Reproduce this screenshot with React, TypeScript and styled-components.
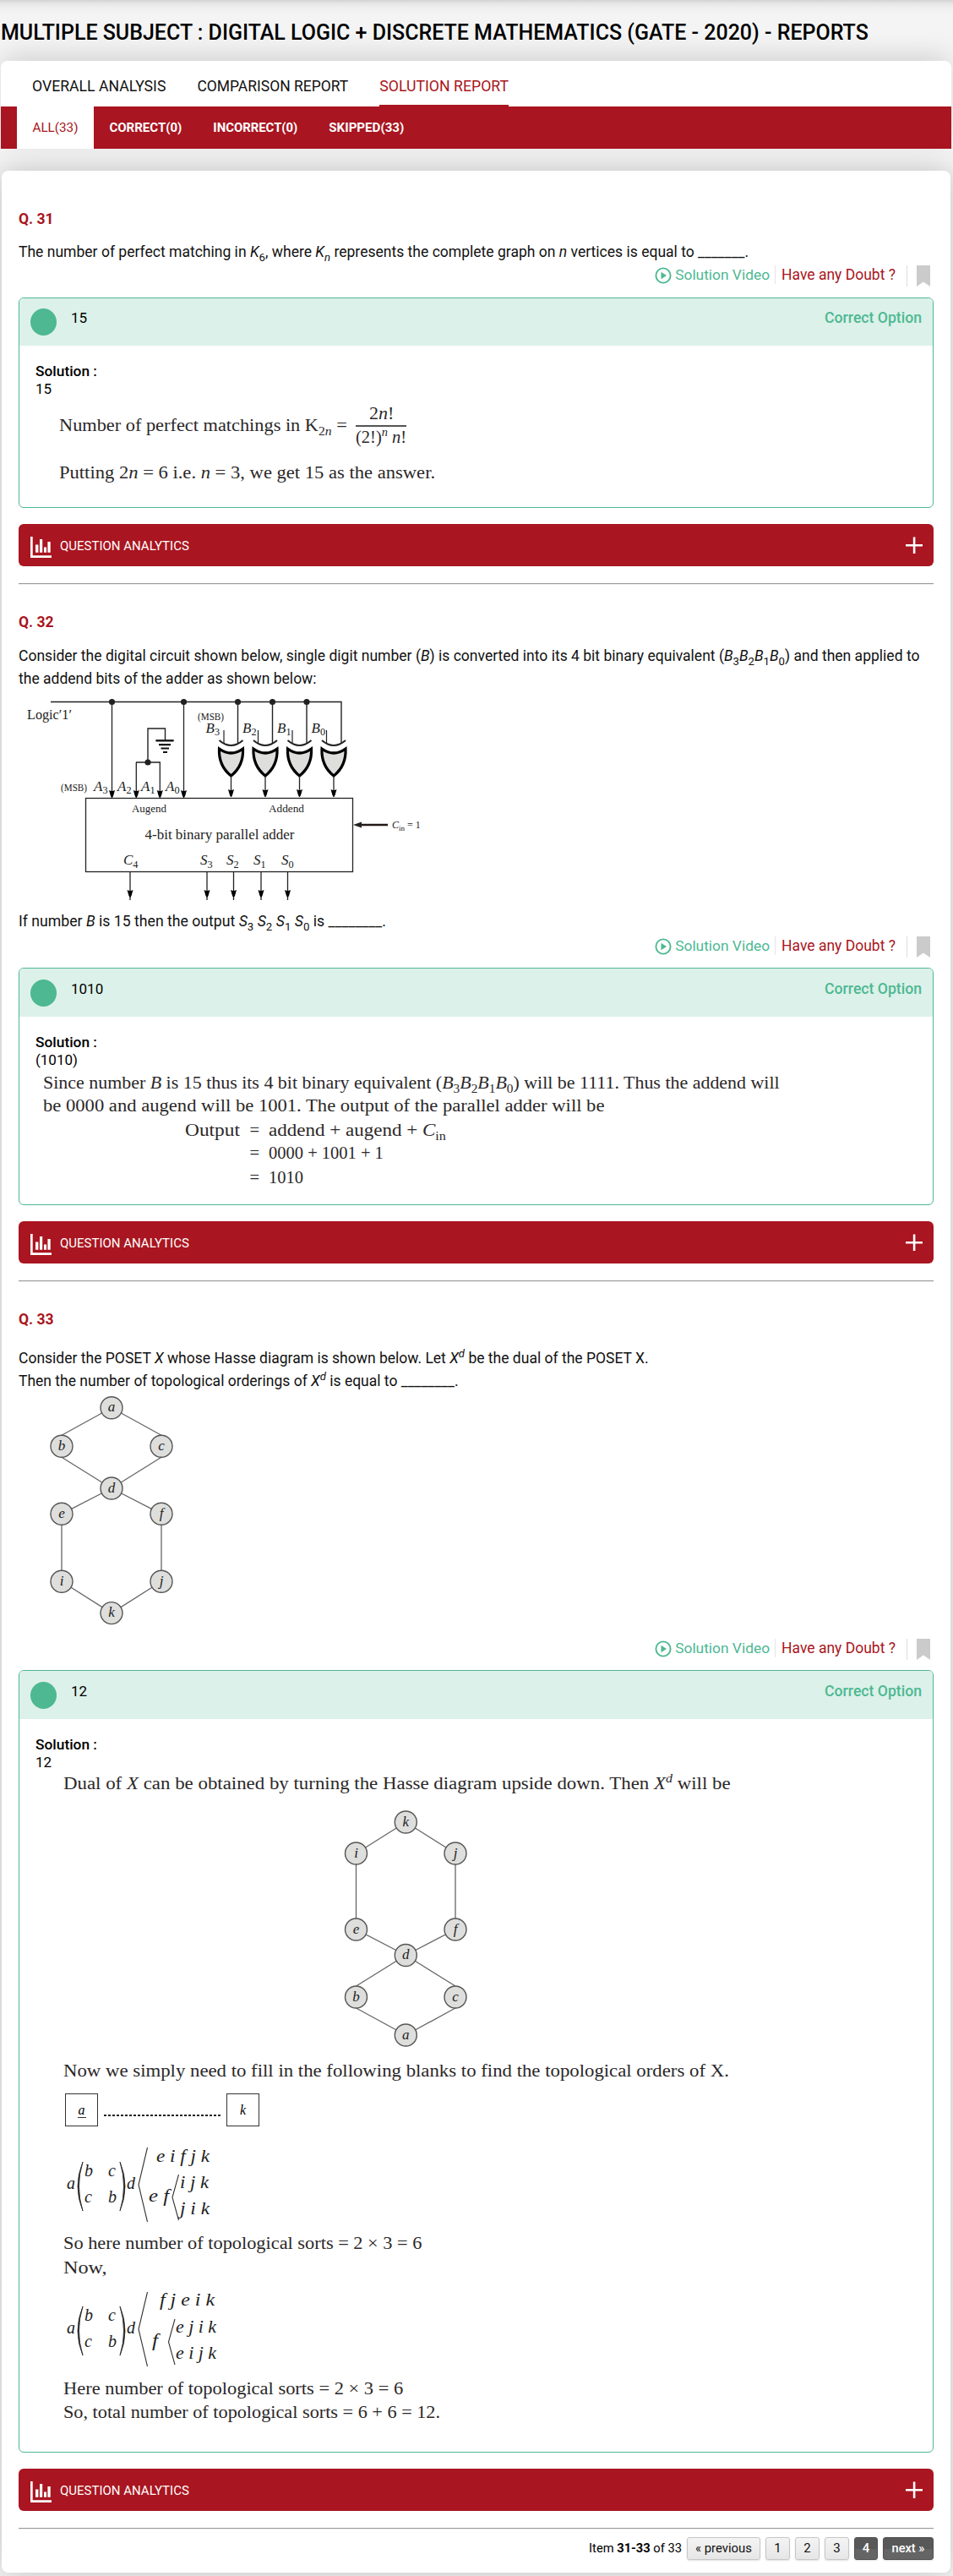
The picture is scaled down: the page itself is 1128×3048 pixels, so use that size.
import React, { useLayoutEffect, useRef, useState } from "react";
import styled, { createGlobalStyle } from "styled-components";

const RED = "#a91520";
const GREEN = "#4db892";
const SERIF = '"Liberation Serif", "Times New Roman", serif';

const Global = createGlobalStyle`
  * { box-sizing: border-box; }
  body {
    margin: 0;
    background: #f4f4f4;
    font-family: Roboto, "Liberation Sans", sans-serif;
    font-size: 17px;
    color: #000;
    overflow-x: hidden;
  }
  sub, sup { font-size: 75%; line-height: 0; }
`;

const Page = styled.div`
  height: 3048px;
  overflow: hidden;
  background: linear-gradient(#d3d3d3, #e6e6e6 4px, #f0f0f0 10px, #f4f4f4 18px);
`;
const Title = styled.h1`
  margin: 0;
  height: 72px;
  padding: 24px 0 0 1px;
  font-size: 25px;
  line-height: 29px;
  font-weight: 500;
`;
const HeaderCard = styled.header`
  margin: 0 2px 26px 1px;
  border-radius: 8px 8px 0 0;
  background: #fff;
  box-shadow: 0 -10px 30px -4px rgba(0, 0, 0, 0.14);
`;
const Tabs = styled.nav`
  display: flex;
  gap: 37px;
  height: 54px;
  padding-left: 37px;
`;
const Tab = styled.a<{ $on?: boolean }>`
  height: 54px;
  padding-top: 19px;
  line-height: 22px;
  color: ${(p) => (p.$on ? RED : "#111")};
  border-bottom: 2px solid ${(p) => (p.$on ? RED : "transparent")};
`;
const SubTabs = styled.nav`
  display: flex;
  height: 50px;
  padding-left: 19px;
  background: ${RED};
`;
const SubTab = styled.a<{ $on?: boolean }>`
  height: 50px;
  padding: 0 18.5px;
  font-size: 15px;
  line-height: 50px;
  font-weight: ${(p) => (p.$on ? 400 : 700)};
  color: ${(p) => (p.$on ? RED : "#fff")};
  background: ${(p) => (p.$on ? "#fff" : "transparent")};
`;
const Card = styled.main`
  height: 2842px;
  margin: 0 3px 0 2px;
  padding: 13px 20px 0;
  border-radius: 8px;
  background: #fff;
  box-shadow: 0 0 34px rgba(0, 0, 0, 0.22);
`;
const Question = styled.section`
  padding-top: 34px;
`;
const QuestionNumber = styled.h2<{ $gap: number }>`
  margin: 0 0 ${(p) => p.$gap}px;
  font-size: 17.5px;
  line-height: 20px;
  font-weight: 700;
  color: ${RED};
`;
const Prompt = styled.div`
  line-height: 27px;
  color: #111;
`;
const Row = styled.div`
  white-space: nowrap;
`;
const Line = styled.span`
  display: inline-block;
  width: max-content;
  white-space: nowrap;
  line-height: inherit;
  vertical-align: top;
  transform-origin: 0 50%;
`;
const LineBox = styled.span`
  display: inline-block;
  flex: none;
  vertical-align: top;
  text-align: left;
`;
const Meta = styled.div<{ $top: number; $bottom: number }>`
  display: flex;
  justify-content: flex-end;
  height: 25px;
  margin: ${(p) => p.$top}px 0 ${(p) => p.$bottom}px;
  padding-right: 4px;
  font-size: 18px;
  line-height: 22px;
`;
const VideoLink = styled.a`
  display: flex;
  gap: 4px;
  height: 22px;
  padding-right: 6px;
  border-right: 1px solid #e4e4e4;
  color: ${GREEN};
  svg { margin-top: 2px; }
`;
const DoubtLink = styled.a`
  height: 25px;
  margin-right: 11px;
  padding: 0 13px 0 7px;
  border-right: 1px solid #ddd;
  color: ${RED};
`;
const Panel = styled.article<{ $h: number }>`
  height: ${(p) => p.$h}px;
  margin-bottom: 19px;
  border: 1px solid ${GREEN};
  border-radius: 6px;
  overflow: hidden;
`;
const PanelHead = styled.div<{ $h: number }>`
  display: flex;
  height: ${(p) => p.$h}px;
  padding: ${(p) => p.$h - 44}px 13px 0;
  line-height: 23px;
  background: #dcf1e9;
`;
const Dot = styled.i`
  width: 31px;
  height: 32px;
  margin-right: 17px;
  border-radius: 50%;
  background: ${GREEN};
`;
const CorrectTag = styled.span`
  margin-left: auto;
  font-weight: 500;
  color: ${GREEN};
`;
const PanelBody = styled.div`
  padding: 20px 19px 0;
  line-height: 21px;
`;
const SolutionLabel = styled.div`
  font-weight: 500;
`;
const Print = styled.div<{ $top?: number; $left?: number }>`
  display: flex;
  height: 24px;
  margin: ${(p) => p.$top ?? 0}px 0 0 ${(p) => p.$left ?? 0}px;
  padding-top: 1px;
  font: 20.5px/24px ${SERIF};
  color: #2b2829;
  sub, sup { font-size: 70%; }
`;
const Formula = styled(Print)`
  height: 53px;
  align-items: center;
  gap: 10px;
`;
const Fraction = styled.div`
  display: flex;
  flex-direction: column;
  align-items: center;
  width: 60px;
`;
const Over = styled.div`
  align-self: stretch;
  height: 28px;
  padding-bottom: 2px;
  border-bottom: 2px solid #555;
  text-align: center;
`;
const Steps = styled.div`
  display: grid;
  grid-template-columns: 65px 13px 1fr;
  grid-template-rows: 27px 29px 24px;
  column-gap: 10.5px;
  margin: 6px 0 0 177px;
  font: 20.5px/24px ${SERIF};
  color: #2b2829;
  sub { font-size: 70%; }
`;
const Equals = styled.span`
  grid-column: 2;
  padding-left: 1px;
`;
const Blanks = styled.div`
  display: flex;
  align-items: center;
  gap: 7px;
  margin: 16px 0 0 35px;
`;
const Slot = styled.div<{ $under?: boolean }>`
  display: flex;
  align-items: center;
  justify-content: center;
  width: 39px;
  height: 39px;
  border: 1px solid #333;
  font: italic 16px/17px ${SERIF};
  span { border-bottom: ${(p) => (p.$under ? "1px solid #333" : "0")}; padding: 0 1px; }
`;
const Dots = styled.i`
  width: 138px;
  height: 2px;
  margin-top: 12px;
  background: repeating-linear-gradient(90deg, #222 0 3px, transparent 3px 5px);
`;
const Analytics = styled.button`
  display: flex;
  align-items: center;
  width: 100%;
  height: 50px;
  margin: 0 0 20px;
  padding: 0 13px 0 14px;
  border: 0;
  border-radius: 6px;
  background: ${RED};
  color: #fff;
  font: 16px/20px Roboto, sans-serif;
  svg { display: block; }
  span { padding-top: 2px; }
  svg:first-child { margin: 5px 10px 0 0; }
  svg:last-child { margin-left: auto; }
`;
const Rule = styled.hr`
  height: 2px;
  margin: 0;
  border: 0;
  border-top: 1px solid #9a9a9a;
  background: #eee;
`;
const Pager = styled.footer`
  display: flex;
  justify-content: flex-end;
  gap: 6px;
  margin-top: 9px;
  font-size: 15px;
  line-height: 27px;
`;
const PageButton = styled.a<{ $dark?: boolean; $w: number }>`
  display: flex;
  justify-content: center;
  width: ${(p) => p.$w}px;
  height: 27px;
  border: 1px solid ${(p) => (p.$dark ? "#505050" : "#c6c6c6")};
  border-radius: 3px;
  line-height: 25px;
  font-weight: ${(p) => (p.$dark ? 500 : 400)};
  color: ${(p) => (p.$dark ? "#fff" : "#111")};
  background: ${(p) => (p.$dark ? "linear-gradient(#585858 50%, #656565 55%)" : "linear-gradient(#f4f4f4, #e6e6e6)")};
  box-shadow: 0 1px 2px rgba(0, 0, 0, 0.12);
`;
const Figure = styled.svg`
  display: block;
  font-family: ${SERIF};
  fill: #222;
`;

/** A single line of text whose font size is set so that it fills `w` pixels. */
function Fit({ w, children }: { w: number; children: React.ReactNode }) {
  const ref = useRef<HTMLSpanElement>(null);
  const [size, setSize] = useState<number>();
  useLayoutEffect(() => {
    const el = ref.current;
    if (!el) return;
    el.style.fontSize = "";
    const base = parseFloat(getComputedStyle(el).fontSize);
    setSize((base * w) / el.getBoundingClientRect().width);
  }, [w]);
  return <Line ref={ref} style={{ fontSize: size }}>{children}</Line>;
}

/** A single line of print whose letters are widened to fill `w` pixels. */
function Wide({ w, children }: { w: number; children: React.ReactNode }) {
  const ref = useRef<HTMLSpanElement>(null);
  const [ratio, setRatio] = useState(1);
  useLayoutEffect(() => {
    if (ref.current) setRatio(w / ref.current.offsetWidth);
  }, [w]);
  return (
    <LineBox style={{ width: w }}>
      <Line ref={ref} style={{ transform: `scaleX(${ratio})` }}>{children}</Line>
    </LineBox>
  );
}

const PlayIcon = () => (
  <svg width="20" height="20" viewBox="0 0 20 20">
    <circle cx="10" cy="10" r="8.6" fill="none" stroke={GREEN} strokeWidth="1.9" />
    <path d="M7.5 5.8v8.4l6.5-4.2z" fill={GREEN} />
  </svg>
);
const BookmarkIcon = () => (
  <svg width="16" height="25" viewBox="0 0 16 25">
    <path d="M0 0h16v25l-8-5.6L0 25z" fill="#cbcbcb" />
  </svg>
);
const ChartIcon = () => (
  <svg width="25" height="25" viewBox="0 0 25 25" fill="#fff">
    <path d="M0 0h2.7v22.2H25V25H0zM6 9.400h3.400v9.400H6zM11 3h3.200v15.800h-3.200zM16 12.400h3v6.400h-3zM20.400 6h3.300v12.800h-3.300z" />
  </svg>
);
const PlusIcon = () => (
  <svg width="20" height="20" viewBox="0 0 20 20" fill="#fff">
    <path d="M0 9h20v2.600H0zM8.800 0.500h2.600v19.500H8.800z" />
  </svg>
);

const Actions = ({ top, bottom }: { top: number; bottom: number }) => (
  <Meta $top={top} $bottom={bottom}>
    <VideoLink><PlayIcon /><Fit w={112}>Solution Video</Fit></VideoLink>
    <DoubtLink><Fit w={135}>Have any Doubt ?</Fit></DoubtLink>
    <BookmarkIcon />
  </Meta>
);

const Head = ({ answer, h = 57 }: { answer: string; h?: number }) => (
  <PanelHead $h={h}>
    <Dot />
    {answer}
    <CorrectTag><Fit w={115}>Correct Option</Fit></CorrectTag>
  </PanelHead>
);

const AnalyticsBar = () => (
  <>
    <Analytics><ChartIcon /><Fit w={153}>QUESTION ANALYTICS</Fit><PlusIcon /></Analytics>
    <Rule />
  </>
);

const Sub = ({ x, y, b, n, size = 17 }: { x: number; y: number; b: string; n: string; size?: number }) => (
  <text x={x} y={y} fontSize={size}><tspan fontStyle="italic">{b}</tspan><tspan dy="3.5" fontSize={size * 0.72}>{n}</tspan></text>
);

const Arrow = ({ x, from, to, tail = 0 }: { x: number; from: number; to: number; tail?: number }) => (
  <g>
    <path d={`M${x} ${from}V${to + tail}`} stroke="#222" strokeWidth="1.3" />
    <path d={`M${x - 3.5} ${to - 9}q3.5 2 7 0l-2 7l-1.5 2l-1.5 -2z`} fill="#000" />
  </g>
);

const Circuit = () => (
  <Figure width="500" height="260" viewBox="22 817 500 260">
    <path d="M60 830.5H404V880M175 902V862H195.5V876M161 902H190M184.5 876.3h21" fill="none" stroke="#222" strokeWidth="1.4" />
    <path d="M184.5 876.3h21M188 881.2h14M190.5 885.5h9.5M193 890h5" stroke="#111" strokeWidth="2.2" />
    <path d="M281.5 830V880M322.5 830V880M363 830V880" stroke="#222" strokeWidth="1.4" />
    {[132.5, 217.5, 281.5, 322.5, 363].map((x) => <circle key={x} cx={x} cy="830.5" r="3.6" />)}
    <circle cx="175" cy="902" r="3.6" />
    <Arrow x={132.5} from={830} to={944} />
    <Arrow x={217.5} from={830} to={944} />
    <Arrow x={161.3} from={902} to={944} />
    <Arrow x={189.3} from={902} to={944} />
    {[273.5, 314, 354.5, 395].map((x) => (
      <g key={x}>
        <path d={`M${x - 8.5} 864V880`} stroke="#222" strokeWidth="1.2" />
        <path d={`M${x - 14} 876q14 12 28 0`} fill="none" stroke="#222" strokeWidth="2" />
        <path d={`M${x - 14} 886q14 10 28 0q1 20 -14 32q-15 -12 -14 -32z`} fill="#dededc" stroke="#000" strokeWidth="3.2" />
        <Arrow x={x} from={918} to={943} />
      </g>
    ))}
    <rect x="101.5" y="944.5" width="316" height="87" fill="none" stroke="#222" strokeWidth="1.3" />
    {[154, 245, 276.5, 309, 340.5].map((x) => <Arrow key={x} x={x} from={1032} to={1062} tail={3} />)}
    <path d="M459 976H424" stroke="#231815" strokeWidth="2.4" />
    <path d="M418 976l10-3.500v7z" />
    <text x="32" y="850.7" fontSize="16.5" textLength="53" lengthAdjust="spacingAndGlyphs">Logic′1′</text>
    <text x="234" y="852" fontSize="12.5" textLength="31" lengthAdjust="spacingAndGlyphs">(MSB)</text>
    <text x="72" y="936" fontSize="12.5" textLength="31" lengthAdjust="spacingAndGlyphs">(MSB)</text>
    <Sub x={243.5} y={866.5} b="B" n="3" /><Sub x={287} y={866.5} b="B" n="2" />
    <Sub x={328} y={866.5} b="B" n="1" /><Sub x={368.5} y={866.5} b="B" n="0" />
    <Sub x={111} y={935.5} b="A" n="3" /><Sub x={139} y={935.5} b="A" n="2" />
    <Sub x={167} y={935.5} b="A" n="1" /><Sub x={196} y={935.5} b="A" n="0" />
    <text x="156" y="960.5" fontSize="12.5" textLength="41" lengthAdjust="spacingAndGlyphs">Augend</text>
    <text x="318" y="960.5" fontSize="12.5" textLength="42" lengthAdjust="spacingAndGlyphs">Addend</text>
    <text x="171.5" y="992.7" fontSize="16.5" textLength="177" lengthAdjust="spacingAndGlyphs">4-bit binary parallel adder</text>
    <Sub x={146} y={1023} b="C" n="4" /><Sub x={237} y={1023} b="S" n="3" />
    <Sub x={268} y={1023} b="S" n="2" /><Sub x={300} y={1023} b="S" n="1" /><Sub x={333} y={1023} b="S" n="0" />
    <text x="464" y="980" fontSize="12"><tspan fontStyle="italic">C</tspan><tspan dy="3" fontSize="9">in</tspan><tspan dy="-3" dx="3">= 1</tspan></text>
  </Figure>
);

type Nodes = Record<string, [number, number]>;
const EDGES = ["ab", "ac", "bd", "cd", "de", "df", "ei", "fj", "ik", "jk"];
const Hasse = ({ nodes, width, height, box }: { nodes: Nodes; width: number; height: number; box: string }) => {
  /* b and c join their neighbours at the top and bottom of the circle */
  const anchor = (n: string, other: string): [number, number] => {
    const [x, y] = nodes[n];
    if (n !== "b" && n !== "c") return [x, y];
    return [x, y + (nodes[other][1] > y ? 13 : -13)];
  };
  return (
    <Figure width={width} height={height} viewBox={box}>
      {EDGES.map((e) => {
        const [x1, y1] = anchor(e[0], e[1]);
        const [x2, y2] = anchor(e[1], e[0]);
        return <line key={e} x1={x1} y1={y1} x2={x2} y2={y2} stroke="#666" strokeWidth="1.3" />;
      })}
      {Object.entries(nodes).map(([n, [x, y]]) => (
        <g key={n}>
          <circle cx={x} cy={y} r="13" fill="#dededc" stroke="#555" strokeWidth="1.4" />
          <text x={x} y={y + 4.5} fontSize="17" fontStyle="italic" textAnchor="middle">{n}</text>
        </g>
      ))}
    </Figure>
  );
};

const POSET: Nodes = {
  a: [132, 1665.7], b: [73, 1711.3], c: [191, 1711.3], d: [132, 1761], e: [73, 1791.3],
  f: [191, 1791.3], i: [73, 1871.3], j: [191, 1871.3], k: [132, 1908.6],
};
const DUAL: Nodes = {
  k: [480.3, 2156], i: [421.5, 2193], j: [539, 2193], e: [421.5, 2283], f: [539, 2283],
  d: [480.3, 2313.5], b: [421.5, 2363], c: [539, 2363], a: [480.3, 2408],
};

/* Each piece of text in an ordering: x, baseline, width, letters */
type Piece = [number, number, number, string];
const Orders = ({ height, mt, pieces, inner }: { height: number; mt: number; pieces: Piece[]; inner: string }) => (
  <Figure width="200" height={height} viewBox={`75 ${-mt} 200 ${height}`} fontStyle="italic" fontSize="20">
    <text x="79" y="50">a</text>
    <path d="M98 18Q86 47 98 76Q89 47 98 18zM142 18Q154 47 142 76Q151 47 142 18z" stroke="#222" strokeWidth=".8" />
    <text x="100" y="34.5">b</text><text x="128" y="34.5">c</text>
    <text x="100" y="65.5">c</text><text x="128" y="65.5">b</text>
    <text x="150" y="50">d</text>
    <path d={`M174.5 1L164 45L174.5 89${inner}`} fill="none" stroke="#333" strokeWidth="1.1" />
    {pieces.map(([x, y, w, s]) => (
      <text key={s + y} x={x} y={y} textLength={w} lengthAdjust="spacingAndGlyphs">{s}</text>
    ))}
  </Figure>
);
const FigureInset = styled.div<{ $left: number }>`
  margin-left: ${(p) => p.$left}px;
`;

export default function App() {
  return (
    <Page>
      <Global />
      <Title><Fit w={1027}>MULTIPLE SUBJECT : DIGITAL LOGIC + DISCRETE MATHEMATICS (GATE - 2020) - REPORTS</Fit></Title>
      <HeaderCard>
        <Tabs>
          <Tab><Fit w={158.5}>OVERALL ANALYSIS</Fit></Tab>
          <Tab><Fit w={179}>COMPARISON REPORT</Fit></Tab>
          <Tab $on><Fit w={153}>SOLUTION REPORT</Fit></Tab>
        </Tabs>
        <SubTabs>
          <SubTab $on><Fit w={54}>ALL(33)</Fit></SubTab>
          <SubTab><Fit w={86}>CORRECT(0)</Fit></SubTab>
          <SubTab><Fit w={100}>INCORRECT(0)</Fit></SubTab>
          <SubTab><Fit w={89}>SKIPPED(33)</Fit></SubTab>
        </SubTabs>
      </HeaderCard>
      <Card>
        <Question>
          <QuestionNumber $gap={16}>Q. 31</QuestionNumber>
          <Prompt>
            <Row><Fit w={865}>The number of perfect matching in <i>K</i><sub>6</sub>, where <i>K<sub>n</sub></i> represents the complete graph on <i>n</i> vertices is equal to _______.</Fit></Row>
          </Prompt>
          <Actions top={2} bottom={13} />
          <Panel $h={249}>
            <Head answer="15" h={56} />
            <PanelBody>
              <SolutionLabel><Fit w={73}>Solution :</Fit></SolutionLabel>
              <Row>15</Row>
              <Formula $top={5} $left={28}>
                <Wide w={341}>Number of perfect matchings in K<sub>2<i>n</i></sub> =</Wide>
                <Fraction>
                  <Over><Wide w={29}>2<i>n</i>!</Wide></Over>
                  <Wide w={60}>(2!)<sup><i>n</i></sup> <i>n</i>!</Wide>
                </Fraction>
              </Formula>
              <Print $top={17} $left={28}><Wide w={445}>Putting 2<i>n</i> = 6 i.e. <i>n</i> = 3, we get 15 as the answer.</Wide></Print>
            </PanelBody>
          </Panel>
          <AnalyticsBar />
        </Question>

        <Question>
          <QuestionNumber $gap={17}>Q. 32</QuestionNumber>
          <Prompt>
            <Row><Fit w={1068}>Consider the digital circuit shown below, single digit number (<i>B</i>) is converted into its 4 bit binary equivalent (<i>B</i><sub>3</sub><i>B</i><sub>2</sub><i>B</i><sub>1</sub><i>B</i><sub>0</sub>) and then applied to</Fit></Row>
            <Row><Fit w={353}>the addend bits of the adder as shown below:</Fit></Row>
            <Circuit />
            <Row><Fit w={435}>If number <i>B</i> is 15 then the output <i>S</i><sub>3</sub> <i>S</i><sub>2</sub> <i>S</i><sub>1</sub> <i>S</i><sub>0</sub> is ________.</Fit></Row>
          </Prompt>
          <Actions top={4} bottom={12} />
          <Panel $h={281}>
            <Head answer="1010" />
            <PanelBody>
              <SolutionLabel><Fit w={73}>Solution :</Fit></SolutionLabel>
              <Row>(1010)</Row>
              <Print $top={3} $left={9}><Wide w={872}>Since number <i>B</i> is 15 thus its 4 bit binary equivalent (<i>B</i><sub>3</sub><i>B</i><sub>2</sub><i>B</i><sub>1</sub><i>B</i><sub>0</sub>) will be 1111. Thus the addend will</Wide></Print>
              <Print $top={3} $left={9}><Wide w={665}>be 0000 and augend will be 1001. The output of the parallel adder will be</Wide></Print>
              <Steps>
                <Wide w={65}>Output</Wide><Equals>=</Equals><Wide w={210}>addend + augend + <i>C</i><sub>in</sub></Wide>
                <Equals>=</Equals><Wide w={136}>0000 + 1001 + 1</Wide>
                <Equals>=</Equals><Wide w={41}>1010</Wide>
              </Steps>
            </PanelBody>
          </Panel>
          <AnalyticsBar />
        </Question>

        <Question>
          <QuestionNumber $gap={23}>Q. 33</QuestionNumber>
          <Prompt>
            <Row><Fit w={746}>Consider the POSET <i>X</i> whose Hasse diagram is shown below. Let <i>X<sup>d</sup></i> be the dual of the POSET X.</Fit></Row>
            <Row><Fit w={521}>Then the number of topological orderings of <i>X<sup>d</sup></i> is equal to ________.</Fit></Row>
            <Hasse nodes={POSET} width={240} height={287} box="22 1648 240 287" />
          </Prompt>
          <Actions top={4} bottom={12} />
          <Panel $h={926}>
            <Head answer="12" />
            <PanelBody>
              <SolutionLabel><Fit w={73}>Solution :</Fit></SolutionLabel>
              <Row>12</Row>
              <Print $top={1} $left={33}><Wide w={790}>Dual of <i>X</i> can be obtained by turning the Hasse diagram upside down. Then <i>X<sup>d</sup></i> will be</Wide></Print>
              <FigureInset $left={358}>
                <Hasse nodes={DUAL} width={200} height={316} box="400 2121 200 316" />
              </FigureInset>
              <Print $left={33}><Wide w={788}>Now we simply need to fill in the following blanks to find the topological orders of X.</Wide></Print>
              <Blanks><Slot $under><span>a</span></Slot><Dots /><Slot><span>k</span></Slot></Blanks>
              <FigureInset $left={33}>
                <Orders height={125} mt={24} inner="M211.5 33L204 60L211.5 87"
                  pieces={[[185, 18, 63, "e i f j k"], [213, 49, 34, "i j k"], [176, 65, 24, "e f"], [213, 80, 35, "j i k"]]} />
              </FigureInset>
              <Print $left={33}><Wide w={424}>So here number of topological sorts = 2 × 3 = 6</Wide></Print>
              <Print $top={5} $left={33}><Wide w={52}>Now,</Wide></Print>
              <FigureInset $left={33}>
                <Orders height={119} mt={17} inner="M207 33L199.5 60L207 87"
                  pieces={[[189, 17, 65, "f j e i k"], [208, 49, 48, "e j i k"], [180, 65, 7, "f"], [208, 80, 48, "e i j k"]]} />
              </FigureInset>
              <Print $left={33}><Wide w={402}>Here number of topological sorts = 2 × 3 = 6</Wide></Print>
              <Print $top={4} $left={33}><Wide w={446}>So, total number of topological sorts = 6 + 6 = 12.</Wide></Print>
            </PanelBody>
          </Panel>
          <AnalyticsBar />
        </Question>
        <Pager>
          <Fit w={110}>Item <b>31-33</b> of 33</Fit>
          <PageButton $w={87}><Fit w={67}>« previous</Fit></PageButton>
          <PageButton $w={29}>1</PageButton>
          <PageButton $w={29}>2</PageButton>
          <PageButton $w={29}>3</PageButton>
          <PageButton $w={28} $dark>4</PageButton>
          <PageButton $w={60} $dark><Fit w={39}>next »</Fit></PageButton>
        </Pager>
      </Card>
    </Page>
  );
}
